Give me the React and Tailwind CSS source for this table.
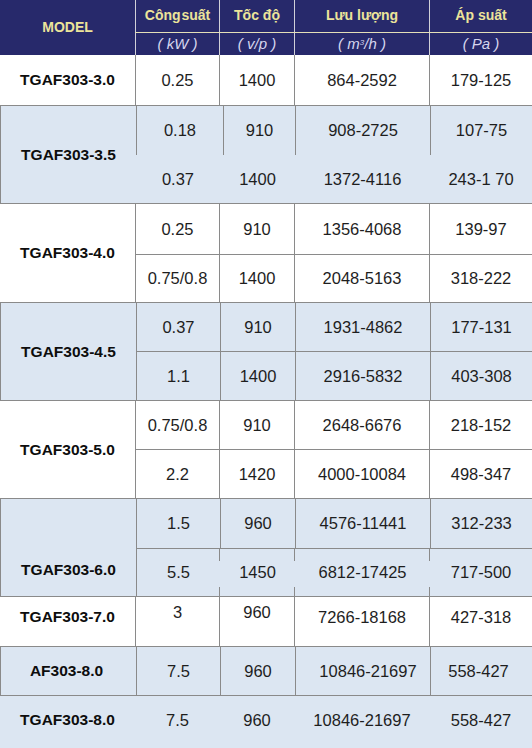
import React from "react";

const FONT = { fontFamily: '"Liberation Sans", Arial, sans-serif' };
const BLUE = "bg-[#dce6f2]";
const LINE = "border-[#8a8a8a]";

function Cell({ w, children, border = true, extra = "" }) {
  return (
    <div
      className={`${w} flex items-center justify-center text-[16.5px] text-[#1e1e1e] ${
        border ? `border-l ${LINE}` : ""
      } ${extra}`}
    >
      {children}
    </div>
  );
}

const W = ["w-[84px]", "w-[75px]", "w-[135px]", "flex-1"];

function SubRow({ vals, h, border = true, bottom = false, widths = W, extra = "", cellExtra = [] }) {
  return (
    <div className={`flex ${h} ${bottom ? `border-b ${LINE}` : ""} ${extra}`}>
      {vals.map((v, i) => (
        <Cell key={i} w={widths[i]} border={border} extra={cellExtra[i] || ""}>
          {v}
        </Cell>
      ))}
    </div>
  );
}

function Model({ children, extra = "" }) {
  return (
    <div
      className={`w-[135px] shrink-0 flex items-center justify-center text-[15.5px] font-bold text-[#0d0d0d] ${extra}`}
    >
      {children}
    </div>
  );
}

const STUB =
  "relative before:absolute before:left-[-1px] before:top-0 before:h-[12px] before:w-px before:bg-[#8a8a8a] after:absolute after:left-[-1px] after:bottom-0 after:h-[9px] after:w-px after:bg-[#8a8a8a]";

export default function App() {
  return (
    <div className="w-[532px] h-[748px] bg-white overflow-hidden" style={FONT}>
      {/* Header */}
      <div className="flex h-[55px] bg-[#27296b]">
        <div className="w-[135px] shrink-0 flex items-center justify-center text-[14px] font-bold text-[#ece49a]">
          MODEL
        </div>
        <div className="flex-1 flex flex-col">
          <div className="flex h-[35px] border-b border-[#e4dfb8] text-[14px] font-bold text-[#ece49a]">
            <div className="w-[84px] flex items-center justify-center border-l border-[#d0d0d8] [word-spacing:-3px]">
              Công suất
            </div>
            <div className="w-[75px] flex items-center justify-center border-l border-[#d0d0d8]">
              Tốc độ
            </div>
            <div className="w-[135px] flex items-center justify-center border-l border-[#d0d0d8]">
              Lưu lượng
            </div>
            <div className="flex-1 flex items-center justify-center border-l border-[#d0d0d8]">
              Áp suất
            </div>
          </div>
          <div className="flex flex-1 text-[15px] italic text-[#d6d6ee]">
            <div className="w-[84px] flex items-center justify-center border-l border-[#d0d0d8]">
              ( kW )
            </div>
            <div className="w-[75px] flex items-center justify-center border-l border-[#d0d0d8]">
              ( v/p )
            </div>
            <div className="w-[135px] flex items-center justify-center border-l border-[#d0d0d8]">
              <span>
                ( m<sup className="text-[8px]">3</sup>/h )
              </span>
            </div>
            <div className="flex-1 flex items-center justify-center border-l border-[#d0d0d8]">
              ( Pa )
            </div>
          </div>
        </div>
      </div>

      {/* TGAF303-3.0 */}
      <div className={`flex h-[51px] border-b ${LINE}`}>
        <Model>TGAF303-3.0</Model>
        <div className="flex-1 flex flex-col">
          <SubRow vals={["0.25", "1400", "864-2592", "179-125"]} h="h-[50px]" />
        </div>
      </div>

      {/* TGAF303-3.5 */}
      <div className={`flex h-[98px] border-b ${LINE} ${BLUE} border-l`}>
        <Model extra="w-[134px]">TGAF303-3.5</Model>
        <div className="flex-1 flex flex-col">
          <SubRow
            vals={["0.18", "910", "908-2725", "107-75"]}
            h="h-[49px]"
            widths={["w-[87px]", "w-[72px]", "w-[135px]", "flex-1"]}
          />
          <SubRow vals={["0.37", "1400", "1372-4116", "243-1 70"]} h="h-[48px]" border={false} />
        </div>
      </div>

      {/* TGAF303-4.0 */}
      <div className={`flex h-[99px] border-b ${LINE}`}>
        <Model>TGAF303-4.0</Model>
        <div className="flex-1 flex flex-col">
          <SubRow vals={["0.25", "910", "1356-4068", "139-97"]} h="h-[51px]" bottom />
          <SubRow vals={["0.75/0.8", "1400", "2048-5163", "318-222"]} h="h-[47px]" />
        </div>
      </div>

      {/* TGAF303-4.5 */}
      <div className={`flex h-[98px] border-b ${LINE} ${BLUE} border-l`}>
        <Model extra="w-[134px]">TGAF303-4.5</Model>
        <div className="flex-1 flex flex-col">
          <SubRow vals={["0.37", "910", "1931-4862", "177-131"]} h="h-[49px]" bottom />
          <SubRow vals={["1.1", "1400", "2916-5832", "403-308"]} h="h-[48px]" />
        </div>
      </div>

      {/* TGAF303-5.0 */}
      <div className={`flex h-[98px] border-b ${LINE}`}>
        <Model>TGAF303-5.0</Model>
        <div className="flex-1 flex flex-col">
          <SubRow vals={["0.75/0.8", "910", "2648-6676", "218-152"]} h="h-[49px]" bottom />
          <SubRow vals={["2.2", "1420", "4000-10084", "498-347"]} h="h-[48px]" />
        </div>
      </div>

      {/* TGAF303-6.0 */}
      <div className={`flex h-[98px] border-b ${LINE} ${BLUE} border-l`}>
        <Model extra="w-[134px] items-end pb-[15px]">TGAF303-6.0</Model>
        <div className="flex-1 flex flex-col">
          <SubRow vals={["1.5", "960", "4576-11441", "312-233"]} h="h-[50px]" bottom />
          <div className="flex h-[47px]">
            {["5.5", "1450", "6812-17425", "717-500"].map((v, i) => (
              <div
                key={i}
                className={`${W[i]} ${i === 0 ? `border-l ${LINE}` : STUB} flex items-center justify-center text-[16.5px] text-[#1e1e1e]`}
              >
                {v}
              </div>
            ))}
          </div>
        </div>
      </div>

      {/* TGAF303-7.0 */}
      <div className={`flex h-[50px] border-b ${LINE}`}>
        <Model extra="pb-[9px]">TGAF303-7.0</Model>
        <div className="flex-1 flex flex-col">
          <SubRow
            vals={["3", "960", "7266-18168", "427-318"]}
            h="h-[49px]"
            cellExtra={["pb-[19px]", "pb-[19px]", "pb-[9px]", "pb-[9px]"]}
          />
        </div>
      </div>

      {/* AF303-8.0 */}
      <div className={`flex h-[49px] border-b ${LINE} ${BLUE} border-l`}>
        <Model extra="w-[134px] pr-[4px]">AF303-8.0</Model>
        <div className="flex-1 flex flex-col">
          <SubRow
            vals={["7.5", "960", "10846-21697", "558-427"]}
            h="h-[48px]"
            cellExtra={["", "", "pl-[10px]", "pr-[6px]"]}
          />
        </div>
      </div>

      {/* TGAF303-8.0 */}
      <div className={`flex h-[52px] ${BLUE}`}>
        <Model extra="pb-[4px]">TGAF303-8.0</Model>
        <div className="flex-1 flex flex-col">
          <SubRow
            vals={["7.5", "960", "10846-21697", "558-427"]}
            h="h-[48px]"
            border={false}
            cellExtra={["pl-px", "pl-px", "pl-px", "pl-px"]}
          />
        </div>
      </div>
    </div>
  );
}
